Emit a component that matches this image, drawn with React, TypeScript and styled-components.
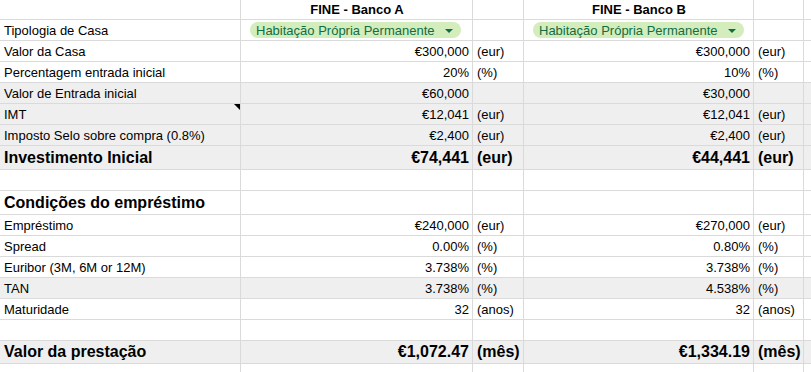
import React from 'react'
import styled, { createGlobalStyle } from 'styled-components'

const GlobalStyle = createGlobalStyle`
  html, body {
    margin: 0;
    padding: 0;
    background: #ffffff;
  }
  body {
    font-family: "Liberation Sans", Arial, sans-serif;
    color: #000000;
  }
`

const COLUMNS = '241px 232px 51px 230px 50px 1fr'
const GRID = '#dadada'

type Align = 'left' | 'right' | 'center'

interface RowData {
  label?: string
  a?: string
  aUnit?: string
  b?: string
  bUnit?: string
  height: number
  shaded?: boolean
  big?: boolean
  comment?: boolean
}

const rows: RowData[] = [
  { label: 'Valor da Casa', a: '€300,000', aUnit: '(eur)', b: '€300,000', bUnit: '(eur)', height: 21 },
  { label: 'Percentagem entrada inicial', a: '20%', aUnit: '(%)', b: '10%', bUnit: '(%)', height: 21 },
  { label: 'Valor de Entrada inicial', a: '€60,000', b: '€30,000', height: 21, shaded: true },
  { label: 'IMT', a: '€12,041', aUnit: '(eur)', b: '€12,041', bUnit: '(eur)', height: 21, shaded: true, comment: true },
  { label: 'Imposto Selo sobre compra (0.8%)', a: '€2,400', aUnit: '(eur)', b: '€2,400', bUnit: '(eur)', height: 21, shaded: true },
  { label: 'Investimento Inicial', a: '€74,441', aUnit: '(eur)', b: '€44,441', bUnit: '(eur)', height: 24, shaded: true, big: true },
  { height: 21 },
  { label: 'Condições do empréstimo', height: 24, big: true },
  { label: 'Empréstimo', a: '€240,000', aUnit: '(eur)', b: '€270,000', bUnit: '(eur)', height: 21 },
  { label: 'Spread', a: '0.00%', aUnit: '(%)', b: '0.80%', bUnit: '(%)', height: 21 },
  { label: 'Euribor (3M, 6M or 12M)', a: '3.738%', aUnit: '(%)', b: '3.738%', bUnit: '(%)', height: 21 },
  { label: 'TAN', a: '3.738%', aUnit: '(%)', b: '4.538%', bUnit: '(%)', height: 21, shaded: true },
  { label: 'Maturidade', a: '32', aUnit: '(anos)', b: '32', bUnit: '(anos)', height: 21 },
  { height: 21 },
  { label: 'Valor da prestação', a: '€1,072.47', aUnit: '(mês)', b: '€1,334.19', bUnit: '(mês)', height: 23, shaded: true, big: true },
  { height: 21 },
]

const App: React.FC = () => {
  return (
    <>
      <GlobalStyle />
      <Sheet>
        <Row $height={20}>
          <Cell />
          <Cell $align='center' $bold>FINE - Banco A</Cell>
          <Cell />
          <Cell $align='center' $bold>FINE - Banco B</Cell>
          <Cell />
          <Cell $last />
        </Row>
        <Row $height={21}>
          <Cell>Tipologia de Casa</Cell>
          <ChipCell>
            <Chip>
              <span>Habitação Própria Permanente</span>
              <ChipArrow />
            </Chip>
          </ChipCell>
          <Cell />
          <ChipCell>
            <Chip>
              <span>Habitação Própria Permanente</span>
              <ChipArrow />
            </Chip>
          </ChipCell>
          <Cell />
          <Cell $last />
        </Row>
        {rows.map((row, i) => (
          <Row key={i} $height={row.height} $shaded={row.shaded}>
            <Cell $big={row.big} $bold={row.big}>
              {row.label}
              {row.comment && <CommentMark />}
            </Cell>
            <Cell $align='right' $big={row.big} $bold={row.big}>{row.a}</Cell>
            <Cell $big={row.big} $bold={row.big}>{row.aUnit}</Cell>
            <Cell $align='right' $big={row.big} $bold={row.big}>{row.b}</Cell>
            <Cell $big={row.big} $bold={row.big}>{row.bUnit}</Cell>
            <Cell $last />
          </Row>
        ))}
      </Sheet>
    </>
  )
}

const Sheet = styled.div`
  width: 811px;
  height: 372px;
  overflow: hidden;
  display: flex;
  flex-direction: column;
`

const Row = styled.div<{ $height: number; $shaded?: boolean }>`
  display: grid;
  grid-template-columns: ${COLUMNS};
  height: ${props => props.$height}px;
  flex: 0 0 auto;
  background: ${props => (props.$shaded ? '#efefef' : '#ffffff')};
`

const Cell = styled.div<{ $align?: Align; $bold?: boolean; $big?: boolean; $last?: boolean }>`
  position: relative;
  box-sizing: border-box;
  display: flex;
  align-items: center;
  justify-content: ${props =>
    props.$align === 'right' ? 'flex-end' : props.$align === 'center' ? 'center' : 'flex-start'};
  padding: 0 3px 0 4px;
  border-bottom: 1px solid ${GRID};
  border-right: ${props => (props.$last ? 'none' : `1px solid ${GRID}`)};
  font-size: ${props => (props.$big ? 16 : 13)}px;
  line-height: ${props => (props.$big ? 18 : 15)}px;
  font-weight: ${props => (props.$bold ? 700 : 400)};
  white-space: nowrap;
  overflow: visible;
`

const ChipCell = styled.div`
  box-sizing: border-box;
  display: flex;
  align-items: center;
  padding: 0 0 0 9px;
  border-bottom: 1px solid ${GRID};
  border-right: 1px solid ${GRID};
`

const Chip = styled.div`
  display: inline-flex;
  align-items: center;
  gap: 10px;
  height: 16px;
  padding: 0 8px 0 6px;
  border-radius: 8px;
  background: #d4edbc;
  color: #0f6e45;
  font-size: 13px;
  line-height: 15px;
  white-space: nowrap;
`

const ChipArrow = styled.span`
  width: 0;
  height: 0;
  border-left: 4px solid transparent;
  border-right: 4px solid transparent;
  border-top: 4px solid #0f6e45;
  margin-top: 1px;
`

const CommentMark = styled.span`
  position: absolute;
  top: 0;
  right: 0;
  width: 0;
  height: 0;
  border-left: 6px solid transparent;
  border-top: 6px solid #000000;
`

export default App
